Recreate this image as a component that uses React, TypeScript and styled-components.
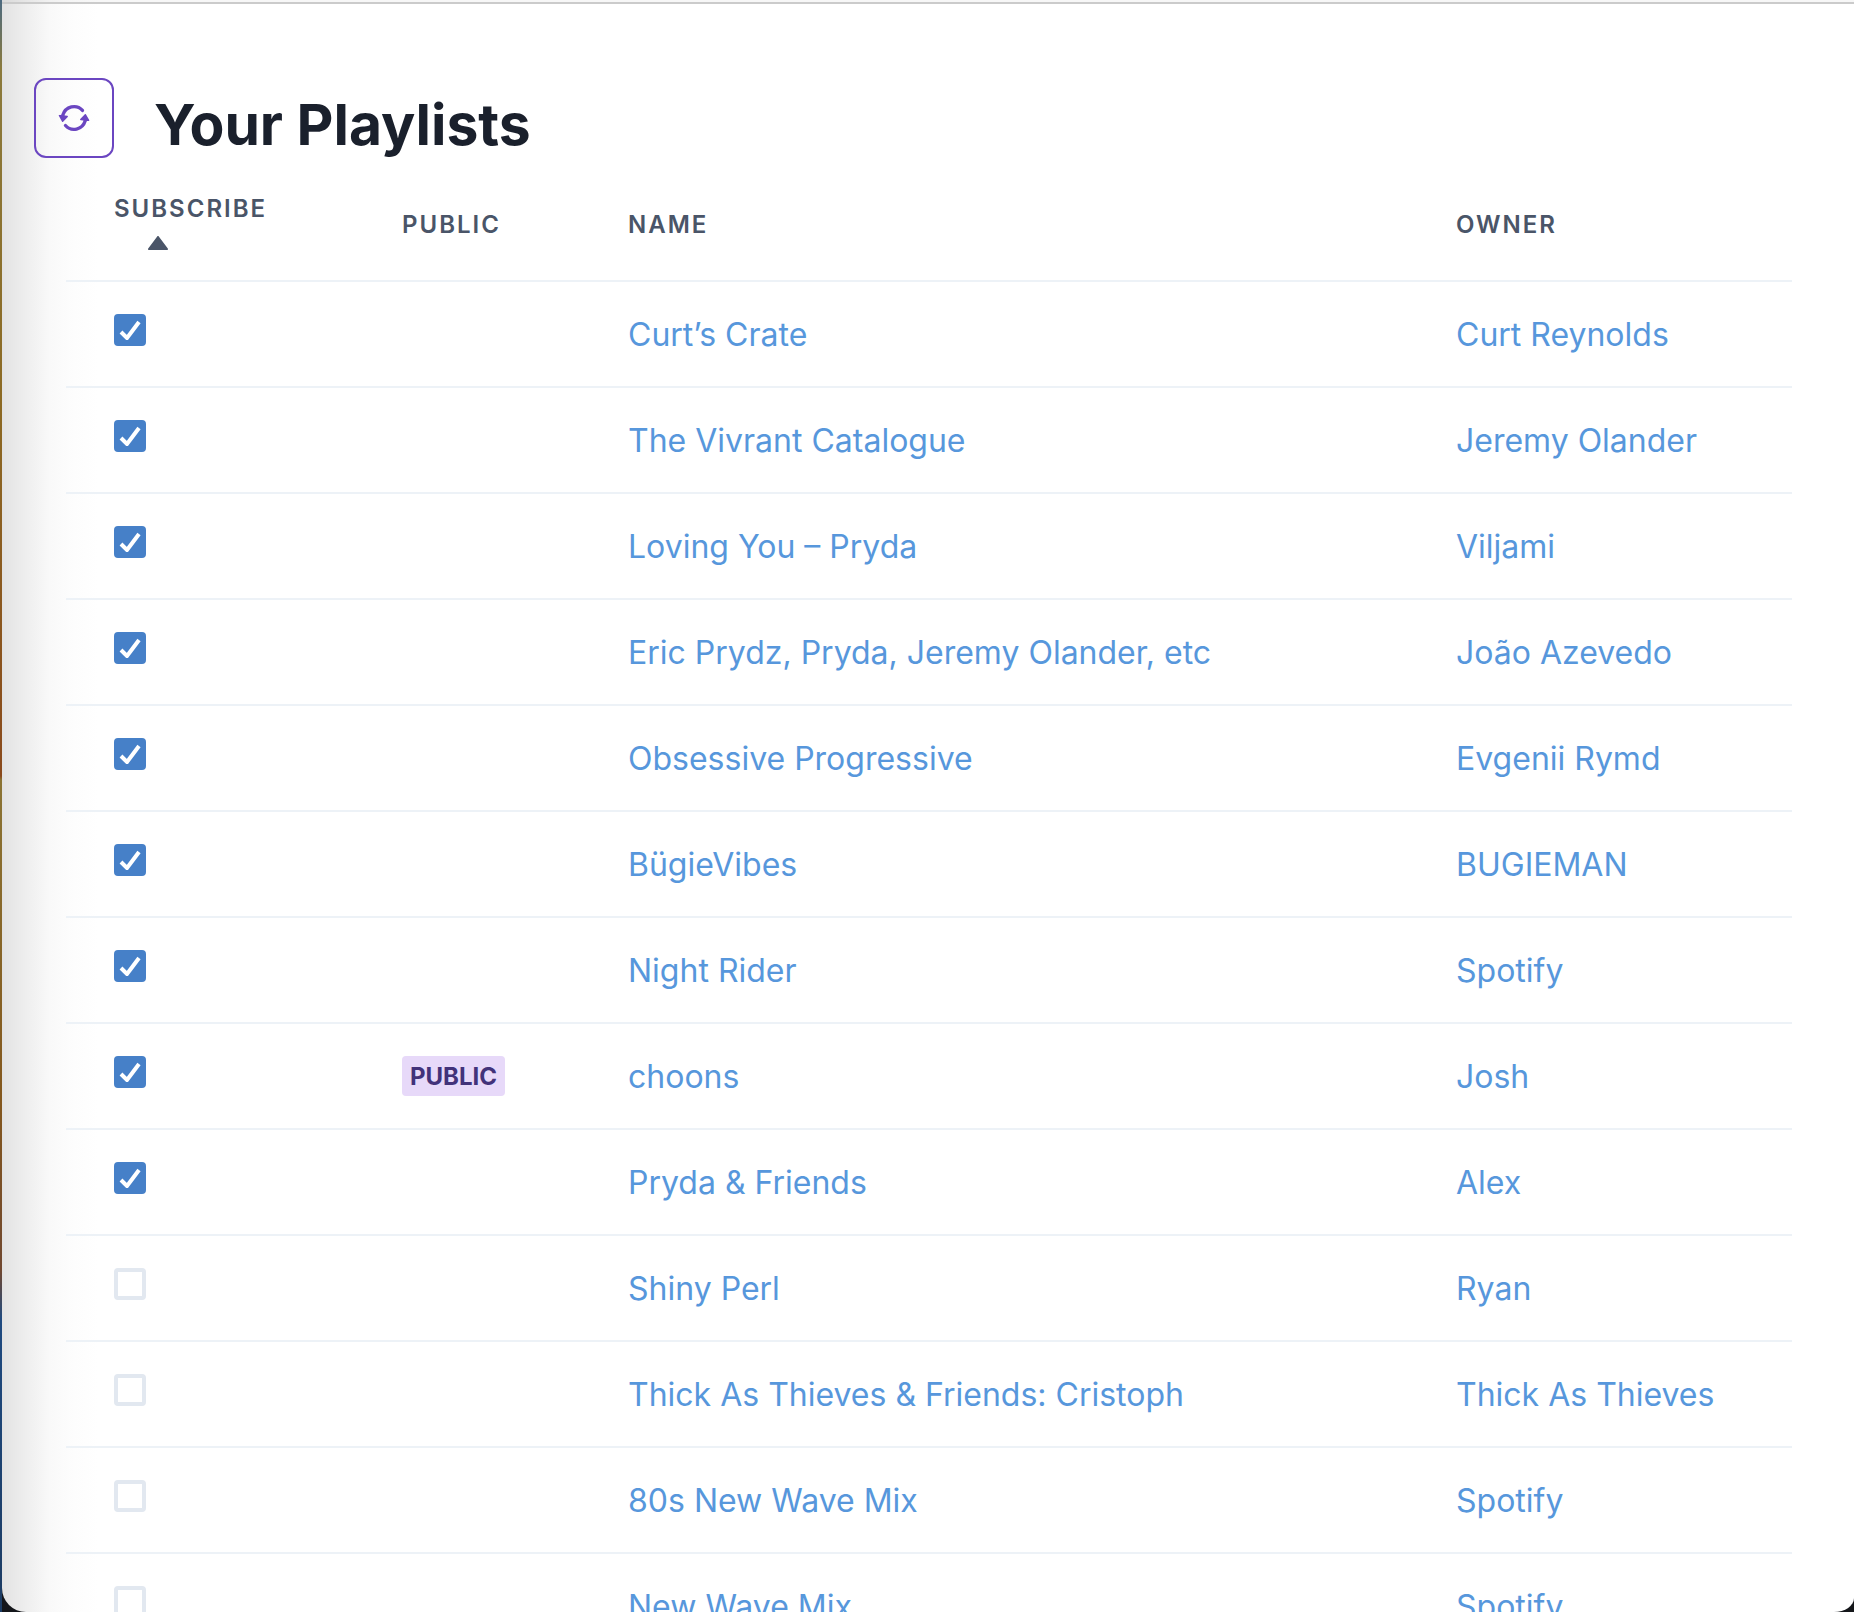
import React, { useState } from "react";
import styled, { createGlobalStyle } from "styled-components";

const GlobalStyle = createGlobalStyle`
  *, *::before, *::after { box-sizing: border-box; }
  body {
    margin: 0;
    background: #14161a;
    color: #1a202c;
    font-family: Inter, "Liberation Sans", sans-serif;
  }
`;

const Desktop = styled.div`
  height: 100vh;
  padding-left: 2px;
  overflow: hidden;
  background:
    linear-gradient(#4c6a80 0, #8b7a3c 70px, #8c6a24 400px, #8a4a1c 776px, #8b7434 780px, #84581e 1100px, #704830 1270px, #1f4a80 1320px, #1c3c64 1590px) left / 2px 100% no-repeat,
    #14161a;
`;

const Window = styled.div`
  height: 100%;
  overflow: hidden;
  border-radius: 0 0 20px 24px / 0 0 14px 24px;
  background: linear-gradient(90deg, #e2e2e2 0, #eeeeee 24px, #f9f9f9 48px, #fdfdfd 72px, #ffffff 96px);
`;

const Toolbar = styled.div`
  height: 4px;
  border-bottom: 2px solid #cbcbcb;
  background: rgba(0, 0, 0, 0.03);
`;

const Main = styled.main`
  padding: 74px 62px 0 32px;
`;

const Header = styled.header`
  display: flex;
  align-items: flex-start;
  gap: 40px;
  height: 90px;
`;

const RefreshButton = styled.button`
  display: flex;
  align-items: center;
  justify-content: center;
  width: 80px;
  height: 80px;
  padding: 0;
  border: 2px solid #6b46c1;
  border-radius: 12px;
  background: transparent;
  color: #6b46c1;
  cursor: pointer;
`;

const Title = styled.h1`
  margin: 0;
  font-size: 57px;
  line-height: 94px;
  font-weight: 700;
`;

const Table = styled.table`
  width: calc(100% - 32px);
  margin-left: 32px;
  border-collapse: separate;
  border-spacing: 0;
  table-layout: fixed;
`;

const Col = styled.col<{ $width?: number }>`
  width: ${(p) => (p.$width ? `${p.$width}px` : "auto")};
`;

const HeadCell = styled.th`
  padding: 25px 48px 23px;
  border-bottom: 2px solid #edf2f7;
  color: #4a5568;
  font-size: 24px;
  line-height: 32px;
  font-weight: 600;
  letter-spacing: 2px;
  text-align: left;
  text-transform: uppercase;
`;

const SortMark = styled.span`
  display: flex;
  align-items: center;
  height: 32px;
  padding: 4px 0 0 32px;
`;

const Cell = styled.td`
  height: 106px;
  padding: 32px 48px 30px;
  border-bottom: 2px solid #edf2f7;
  font-size: 32px;
  line-height: 42px;
  vertical-align: top;
  white-space: nowrap;
`;

const Link = styled.a`
  color: #5797dc;
  text-decoration: none;
`;

const Badge = styled.span`
  display: inline-block;
  padding: 2px 8px 0;
  border-radius: 4px;
  background: #e7d9f9;
  color: #42327a;
  font-size: 24px;
  line-height: 38px;
  font-weight: 700;
  vertical-align: top;
`;

const CheckLabel = styled.label`
  display: grid;
  width: 32px;
  height: 32px;
  place-items: center;
  cursor: pointer;

  & > * { grid-area: 1 / 1; }
`;

const CheckInput = styled.input`
  width: 32px;
  height: 32px;
  margin: 0;
  appearance: none;
  border: 4px solid #e2e8f0;
  border-radius: 4px;

  &:checked {
    border-color: #4680c8;
    background: #4680c8;
  }
`;

const CheckMark = styled.svg`
  width: 24px;
  height: 20px;
  pointer-events: none;
  fill: none;
  stroke: #ffffff;
  stroke-width: 2;
`;

type Playlist = { name: string; owner: string; subscribed?: boolean; isPublic?: boolean };

const initialPlaylists: Playlist[] = [
  { name: "Curt’s Crate", owner: "Curt Reynolds", subscribed: true },
  { name: "The Vivrant Catalogue", owner: "Jeremy Olander", subscribed: true },
  { name: "Loving You – Pryda", owner: "Viljami", subscribed: true },
  { name: "Eric Prydz, Pryda, Jeremy Olander, etc", owner: "João Azevedo", subscribed: true },
  { name: "Obsessive Progressive", owner: "Evgenii Rymd", subscribed: true },
  { name: "BügieVibes", owner: "BUGIEMAN", subscribed: true },
  { name: "Night Rider", owner: "Spotify", subscribed: true },
  { name: "choons", owner: "Josh", subscribed: true, isPublic: true },
  { name: "Pryda & Friends", owner: "Alex", subscribed: true },
  { name: "Shiny Perl", owner: "Ryan" },
  { name: "Thick As Thieves & Friends: Cristoph", owner: "Thick As Thieves" },
  { name: "80s New Wave Mix", owner: "Spotify" },
  { name: "New Wave Mix", owner: "Spotify" },
];

const RepeatIcon = () => (
  <svg width="32" height="32" viewBox="0 0 24 24" fill="currentColor" aria-hidden="true">
    <path d="M10.319,4.936a7.239,7.239,0,0,1,7.1,2.252,1.25,1.25,0,1,0,1.872-1.657A9.737,9.737,0,0,0,9.743,2.5,10.269,10.269,0,0,0,2.378,9.61a.249.249,0,0,1-.271.178l-1.033-.13A.491.491,0,0,0,.6,9.877a.5.5,0,0,0-.019.526l2.476,4.342a.5.5,0,0,0,.373.248.43.43,0,0,0,.062,0,.5.5,0,0,0,.359-.152l3.477-3.593a.5.5,0,0,0-.3-.844L5.15,10.172a.25.25,0,0,1-.2-.333A7.7,7.7,0,0,1,10.319,4.936Z" />
    <path d="M23.406,14.1a.5.5,0,0,0,.015-.526l-2.5-4.329A.5.5,0,0,0,20.546,9a.489.489,0,0,0-.421.151l-3.456,3.614a.5.5,0,0,0,.3.842l1.848.221a.249.249,0,0,1,.183.117.253.253,0,0,1,.023.216,7.688,7.688,0,0,1-5.369,4.9,7.243,7.243,0,0,1-7.1-2.253,1.25,1.25,0,1,0-1.872,1.656,9.74,9.74,0,0,0,9.549,3.03,10.261,10.261,0,0,0,7.369-7.12.251.251,0,0,1,.27-.179l1.058.127a.422.422,0,0,0,.06,0A.5.5,0,0,0,23.406,14.1Z" />
  </svg>
);

const TriangleUpIcon = () => (
  <svg width="24" height="24" viewBox="0 0 24 24" fill="currentColor" aria-hidden="true">
    <path d="M12.8,5.4c-0.377-0.504-1.223-0.504-1.6,0l-9,12c-0.228,0.303-0.264,0.708-0.095,1.047C2.275,18.786,2.621,19,3,19h18c0.379,0,0.725-0.214,0.895-0.553c0.169-0.339,0.133-0.744-0.095-1.047L12.8,5.4z" />
  </svg>
);

export default function App() {
  const [playlists, setPlaylists] = useState(initialPlaylists);

  const toggle = (index: number) =>
    setPlaylists((list) =>
      list.map((item, i) => (i === index ? { ...item, subscribed: !item.subscribed } : item))
    );

  return (
    <Desktop>
      <GlobalStyle />
      <Window>
        <Toolbar />
        <Main>
          <Header>
            <RefreshButton type="button" aria-label="Refresh playlists">
              <RepeatIcon />
            </RefreshButton>
            <Title>Your Playlists</Title>
          </Header>
          <Table>
            <colgroup>
              <Col $width={288} />
              <Col $width={226} />
              <Col />
              <Col $width={384} />
            </colgroup>
            <thead>
              <tr>
                <HeadCell scope="col" aria-sort="ascending">
                  Subscribe
                  <SortMark>
                    <TriangleUpIcon />
                  </SortMark>
                </HeadCell>
                <HeadCell scope="col">Public</HeadCell>
                <HeadCell scope="col">Name</HeadCell>
                <HeadCell scope="col">Owner</HeadCell>
              </tr>
            </thead>
            <tbody>
              {playlists.map((playlist, index) => (
                <tr key={playlist.name}>
                  <Cell>
                    <CheckLabel>
                      <CheckInput
                        type="checkbox"
                        aria-label={`Subscribe to ${playlist.name}`}
                        checked={Boolean(playlist.subscribed)}
                        onChange={() => toggle(index)}
                      />
                      {playlist.subscribed && (
                        <CheckMark viewBox="0 0 12 10" aria-hidden="true">
                          <polyline points="1.5 6 4.5 9 10.5 1" />
                        </CheckMark>
                      )}
                    </CheckLabel>
                  </Cell>
                  <Cell>{playlist.isPublic && <Badge>PUBLIC</Badge>}</Cell>
                  <Cell>
                    <Link href="#playlist">{playlist.name}</Link>
                  </Cell>
                  <Cell>
                    <Link href="#owner">{playlist.owner}</Link>
                  </Cell>
                </tr>
              ))}
            </tbody>
          </Table>
        </Main>
      </Window>
    </Desktop>
  );
}
